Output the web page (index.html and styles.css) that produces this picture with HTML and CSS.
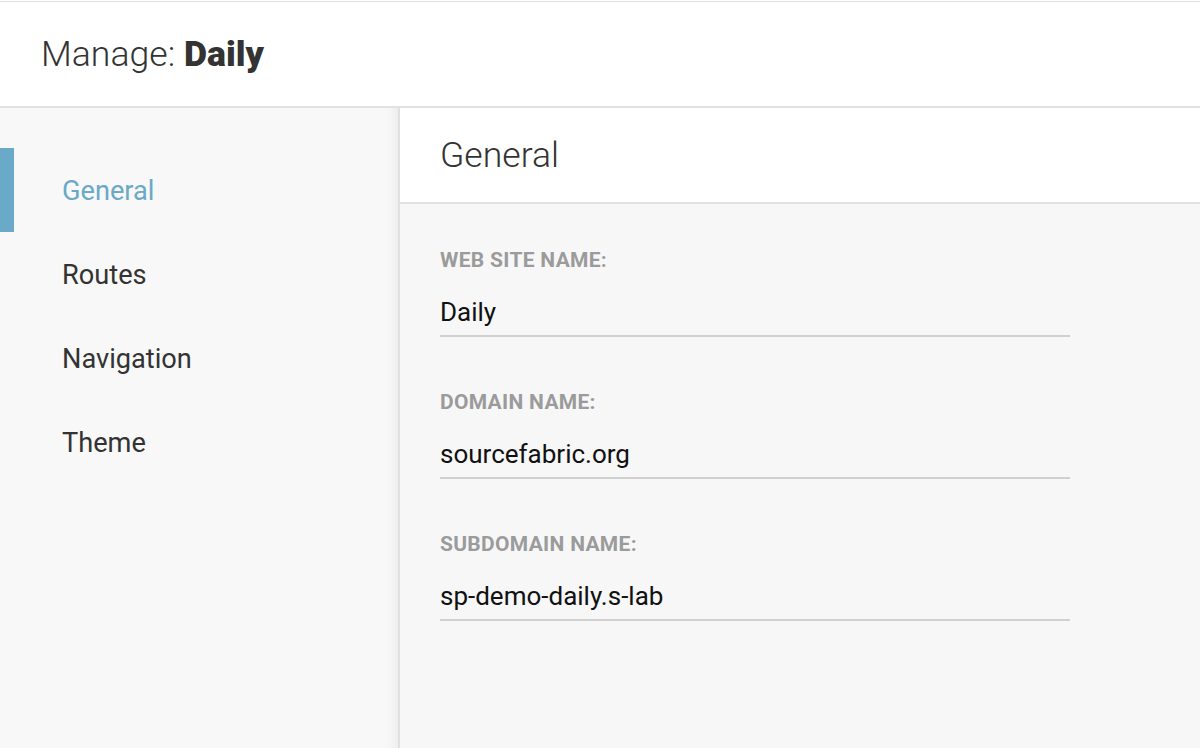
FILE: index.html
```html
<!DOCTYPE html>
<html lang="en">
<head>
<meta charset="utf-8">
<title>Manage: Daily</title>
<link rel="stylesheet" href="styles.css">
</head>
<body>
<div class="page">
  <header class="topbar">
    <h1 class="title"><span class="title-light">Manage:</span> <strong>Daily</strong></h1>
  </header>
  <div class="main">
    <nav class="sidebar">
      <ul class="nav">
        <li class="nav-item active">General</li>
        <li class="nav-item">Routes</li>
        <li class="nav-item">Navigation</li>
        <li class="nav-item">Theme</li>
      </ul>
    </nav>
    <section class="content">
      <div class="content-head">
        <h2 class="content-title">General</h2>
      </div>
      <div class="form">
        <div class="field">
          <div class="field-label">Web site name:</div>
          <div class="field-value">Daily</div>
        </div>
        <div class="field">
          <div class="field-label">Domain name:</div>
          <div class="field-value">sourcefabric.org</div>
        </div>
        <div class="field">
          <div class="field-label">Subdomain name:</div>
          <div class="field-value">sp-demo-daily.s-lab</div>
        </div>
      </div>
    </section>
  </div>
</div>
</body>
</html>
```
FILE: styles.css
```css
* { box-sizing: border-box; }
html, body {
  margin: 0;
  padding: 0;
  height: 100%;
  background: #ffffff;
  font-family: Roboto, "Liberation Sans", Arial, sans-serif;
  color: #333333;
}
.page {
  height: 748px;
  display: flex;
  flex-direction: column;
  padding-top: 1px;
  overflow: hidden;
}
.topbar {
  height: 107px;
  flex: none;
  border-top: 1px solid #e0e0e0;
  border-bottom: 2px solid #e2e2e2;
  background: #ffffff;
  padding-left: 41px;
}
.title {
  margin: 0;
  font-size: 35.6px;
  line-height: 104px;
  font-weight: 700;
  color: #333333;
}
.title-light { font-weight: 300; }
.main {
  flex: 1;
  display: flex;
  min-height: 0;
}
.sidebar {
  width: 400px;
  flex: none;
  background: #f8f8f8;
  border-right: 2px solid #e0e0e0;
  box-shadow: inset -14px 0 14px -12px rgba(0, 0, 0, 0.07);
  padding-top: 40px;
}
.nav {
  list-style: none;
  margin: 0;
  padding: 0;
}
.nav-item {
  height: 84px;
  line-height: 86px;
  font-size: 27.2px;
  font-weight: 400;
  color: #333333;
  border-left: 14px solid transparent;
  padding-left: 48px;
}
.nav-item.active {
  border-left-color: #6aa9c7;
  color: #6aa9c7;
}
.content {
  flex: 1;
  background: #f7f7f7;
  display: flex;
  flex-direction: column;
}
.content-head {
  height: 96px;
  background: #ffffff;
  border-bottom: 2px solid #e2e2e2;
  padding-left: 40px;
}
.content-title {
  margin: 0;
  font-size: 35.6px;
  line-height: 94px;
  font-weight: 300;
  color: #333333;
}
.form {
  padding: 45px 0 0 40px;
  width: 670px;
}
.field {
  margin-bottom: 54px;
}
.field-label {
  font-size: 21px;
  line-height: 22px;
  font-weight: 700;
  letter-spacing: 0.3px;
  text-transform: uppercase;
  color: #9b9b9b;
}
.field-value {
  margin-top: 24px;
  font-size: 26px;
  line-height: 34px;
  color: #111111;
  padding-bottom: 6px;
  border-bottom: 2px solid #d0d0d0;
}
```
